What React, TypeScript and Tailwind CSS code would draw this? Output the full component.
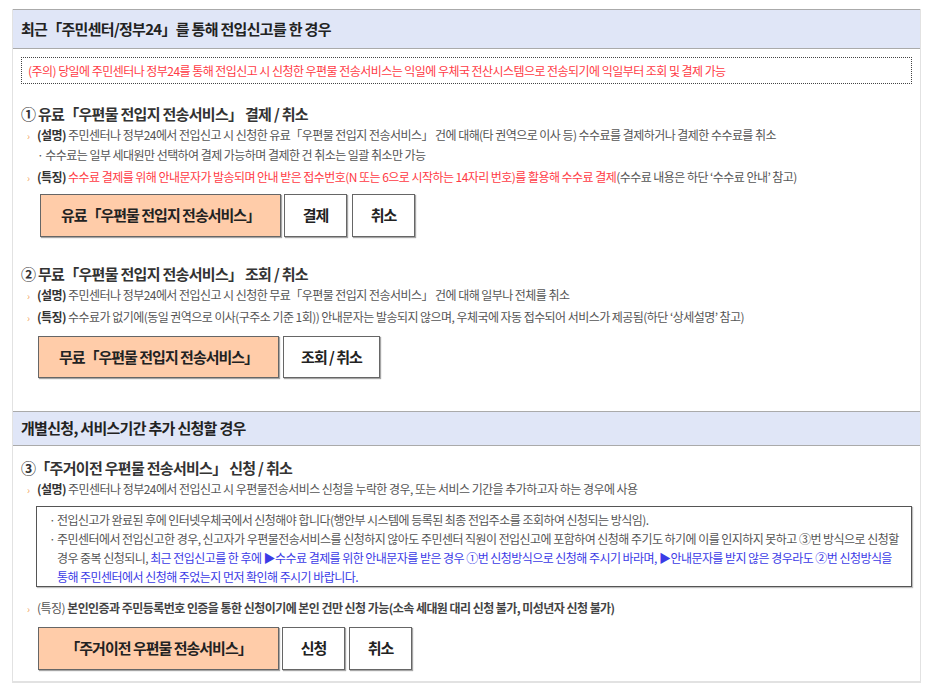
import React from 'react';

const font = "font-['Noto_Sans_CJK_KR','Malgun_Gothic',sans-serif]";

function Marker() {
  return <span className="inline-block w-[10px] text-[10px] text-[#f3a866]">›</span>;
}

function Label({ children }: { children: React.ReactNode }) {
  return <span className="font-bold text-[#333]">{children}</span>;
}

function Btn({ children, w, peach }: { children: React.ReactNode; w: string; peach?: boolean }) {
  return (
    <div
      className={`${w} h-full flex items-center justify-center border border-[#666] shadow-[1px_1px_1px_rgba(0,0,0,0.35)] text-[15px] font-bold tracking-[-1px] text-[#222] ${
        peach ? 'bg-[#ffcca9]' : 'bg-white'
      }`}
    >
      {children}
    </div>
  );
}

function Header({ children, h }: { children: React.ReactNode; h: string }) {
  return (
    <div className={`${h} flex items-center px-[8px] bg-[#e0e6f7] border-y border-[#aaa] text-[15px] font-bold tracking-[-0.7px] text-[#222]`}>
      {children}
    </div>
  );
}

function Heading({ children, className = '' }: { children: React.ReactNode; className?: string }) {
  return <div className={`h-[23px] leading-[23px] text-[15px] font-bold tracking-[-0.7px] text-[#333] ${className}`}>{children}</div>;
}

function Line({ children, className = '' }: { children: React.ReactNode; className?: string }) {
  return <div className={`h-[20px] leading-[20px] pl-[6px] whitespace-nowrap ${className}`}>{children}</div>;
}

export default function App() {
  return (
    <div className={`w-[936px] h-[695px] bg-white pt-[9px] pl-[12px] ${font} text-[12px] tracking-[-0.55px] text-[#555]`}>
      <div className="w-[909px] border-x border-b-2 border-[#e2e2e2]">
        <Header h="h-[40px]">최근「주민센터/정부24」를 통해 전입신고를 한 경우</Header>

        <div className="px-[8px] pt-[8px] pb-[33px]">
          <div className="h-[27px] flex items-center pl-[6px] border border-dotted border-[#444] text-[#ff3b45]">
            (주의) 당일에 주민센터나 정부24를 통해 전입신고 시 신청한 우편물 전송서비스는 익일에 우체국 전산시스템으로 전송되기에 익일부터 조회 및 결제 가능
          </div>

          <Heading className="mt-[18px]">① 유료「우편물 전입지 전송서비스」 결제 / 취소</Heading>
          <Line>
            <Marker />
            <Label>(설명)</Label> 주민센터나 정부24에서 전입신고 시 신청한 유료「우편물 전입지 전송서비스」 건에 대해(타 권역으로 이사 등) 수수료를 결제하거나 결제한 수수료를 취소
          </Line>
          <Line className="pl-[16px]">· 수수료는 일부 세대원만 선택하여 결제 가능하며 결제한 건 취소는 일괄 취소만 가능</Line>
          <Line className="mt-[2px]">
            <Marker />
            <Label>(특징)</Label>{' '}
            <span className="text-[#ff3b45]">
              수수료 결제를 위해 안내문자가 발송되며 안내 받은 접수번호(N 또는 6으로 시작하는 14자리 번호)를 활용해 수수료 결제
            </span>
            (수수료 내용은 하단 ‘수수료 안내’ 참고)
          </Line>
          <div className="mt-[7px] ml-[19px] h-[43px] flex">
            <Btn w="w-[241px]" peach>유료「우편물 전입지 전송서비스」</Btn>
            <div className="ml-[3px]">
              <Btn w="w-[63px]">결제</Btn>
            </div>
            <div className="ml-[5px]">
              <Btn w="w-[63px]">취소</Btn>
            </div>
          </div>

          <Heading className="mt-[25px]">② 무료「우편물 전입지 전송서비스」 조회 / 취소</Heading>
          <Line>
            <Marker />
            <Label>(설명)</Label> 주민센터나 정부24에서 전입신고 시 신청한 무료「우편물 전입지 전송서비스」 건에 대해 일부나 전체를 취소
          </Line>
          <Line className="mt-[2px]">
            <Marker />
            <Label>(특징)</Label> 수수료가 없기에(동일 권역으로 이사(구주소 기준 1회)) 안내문자는 발송되지 않으며, 우체국에 자동 접수되어 서비스가 제공됨(하단 ‘상세설명’ 참고)
          </Line>
          <div className="mt-[9px] ml-[17px] h-[42px] flex">
            <Btn w="w-[241px]" peach>무료「우편물 전입지 전송서비스」</Btn>
            <div className="ml-[4px]">
              <Btn w="w-[97px]">조회 / 취소</Btn>
            </div>
          </div>
        </div>

        <Header h="h-[35px]">개별신청, 서비스기간 추가 신청할 경우</Header>

        <div className="px-[8px] pt-[10px] pb-[11px]">
          <Heading>③「주거이전 우편물 전송서비스」 신청 / 취소</Heading>
          <Line>
            <Marker />
            <Label>(설명)</Label> 주민센터나 정부24에서 전입신고 시 우편물전송서비스 신청을 누락한 경우, 또는 서비스 기간을 추가하고자 하는 경우에 사용
          </Line>
          <div className="mt-[7px] ml-[15px] border border-[#555] shadow-[1px_1px_1px_rgba(0,0,0,0.25)] pt-[3px] pl-[12px] leading-[19px] whitespace-nowrap">
            <div className="flex">
              <span className="w-[8px]">·</span>
              <span>전입신고가 완료된 후에 인터넷우체국에서 신청해야 합니다(행안부 시스템에 등록된 최종 전입주소를 조회하여 신청되는 방식임).</span>
            </div>
            <div className="flex">
              <span className="w-[8px] shrink-0">·</span>
              <div>
                <div>
                  주민센터에서 전입신고한 경우, 신고자가 우편물전송서비스를 신청하지 않아도 주민센터 직원이 전입신고에 포함하여 신청해 주기도 하기에 이를 인지하지 못하고 ③번 방식으로 신청할
                </div>
                <div>
                  경우 중복 신청되니,{' '}
                  <span className="text-[#3b3be6]">
                    최근 전입신고를 한 후에 ▶수수료 결제를 위한 안내문자를 받은 경우 ①번 신청방식으로 신청해 주시기 바라며, ▶안내문자를 받지 않은 경우라도 ②번 신청방식을
                  </span>
                </div>
                <div className="text-[#3b3be6]">통해 주민센터에서 신청해 주었는지 먼저 확인해 주시기 바랍니다.</div>
              </div>
            </div>
          </div>
          <Line className="mt-[11px]">
            <Marker />
            (특징) <span className="font-bold text-[#444]">본인인증과 주민등록번호 인증을 통한 신청이기에 본인 건만 신청 가능(소속 세대원 대리 신청 불가, 미성년자 신청 불가)</span>
          </Line>
          <div className="mt-[9px] ml-[17px] h-[43px] flex">
            <Btn w="w-[241px]" peach>「주거이전 우편물 전송서비스」</Btn>
            <div className="ml-[3px]">
              <Btn w="w-[63px]">신청</Btn>
            </div>
            <div className="ml-[4px]">
              <Btn w="w-[63px]">취소</Btn>
            </div>
          </div>
        </div>
      </div>
    </div>
  );
}
